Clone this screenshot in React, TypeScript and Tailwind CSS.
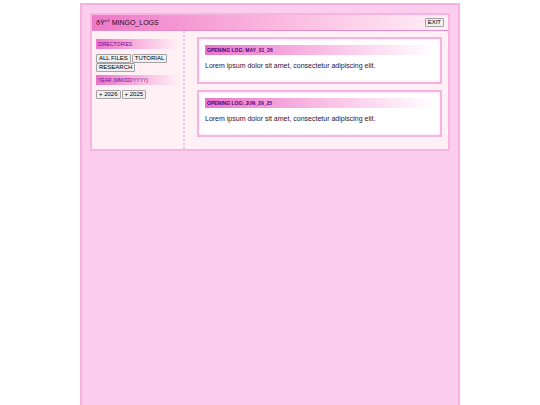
import React from "react";

const btn =
  "h-[9px] rounded-[1px] border border-[#a5a2a5] bg-[#efefef] px-[2px] text-[6px] leading-[7px] whitespace-nowrap text-black";

function Log({ title }: { title: string }) {
  return (
    <article className="h-[47px] border-2 border-[#f3b4e2] bg-white p-[6px] shadow-[inset_0_0_3px_#fbd5f0]">
      <h2 className="h-[10px] bg-linear-to-r from-[#ea74c8] to-white px-[2px] text-[5px] leading-[10px] font-bold text-[#4b0082]">
        {title}
      </h2>
      <p className="mt-[6px] text-[7px] leading-[9px] text-[#2d1237]">
        Lorem ipsum dolor sit amet, consectetur adipiscing elit.
      </p>
    </article>
  );
}

function Directory({ title, items }: { title: string; items: string[] }) {
  return (
    <section>
      <h2 className="h-[10px] bg-linear-to-r from-[#ea74c8] to-[#fff0f5] px-[2px] text-[5px] leading-[10px] text-[#6a0d91]">
        {title}
      </h2>
      <div className="mt-[5px] flex flex-wrap gap-x-px">
        {items.map((item) => (
          <button key={item} type="button" className={btn}>
            {item}
          </button>
        ))}
      </div>
    </section>
  );
}

export default function App() {
  return (
    <div className="h-screen overflow-hidden bg-white px-20 pt-[3px] font-['Liberation_Sans',Arial,sans-serif]">
      <div className="h-full border-2 border-b-0 border-[#f7b0e0] bg-[#fdcdee] p-2">
        <main className="border-2 border-[#f5b5e0] bg-[#fff0f5]">
          <header className="flex h-4 items-center justify-between border-b border-[#e88bc8] bg-linear-to-r from-[#ee78c8] to-[#fff0f5] px-1">
            <h1 className="text-[7px] leading-[9px] text-[#1d0820]">ðŸ“° MINGO_LOGS</h1>
            <button type="button" className={btn}>EXIT</button>
          </header>
          <div className="flex">
            <nav className="flex w-[93px] shrink-0 flex-col gap-[3px] border-r-2 border-dotted border-[#e9c3e2] px-1 py-2">
              <Directory title="DIRECTORIES" items={["ALL FILES", "TUTORIAL", "RESEARCH"]} />
              <Directory title="YEAR (MM/DD/YYYY)" items={["+ 2026", "+ 2025"]} />
            </nav>
            <div className="flex min-w-0 flex-1 flex-col gap-[6px] pt-[6px] pr-[6px] pb-3 pl-3">
              <Log title="OPENING LOG: MAY_01_26" />
              <Log title="OPENING LOG: JUN_29_25" />
            </div>
          </div>
        </main>
      </div>
    </div>
  );
}
